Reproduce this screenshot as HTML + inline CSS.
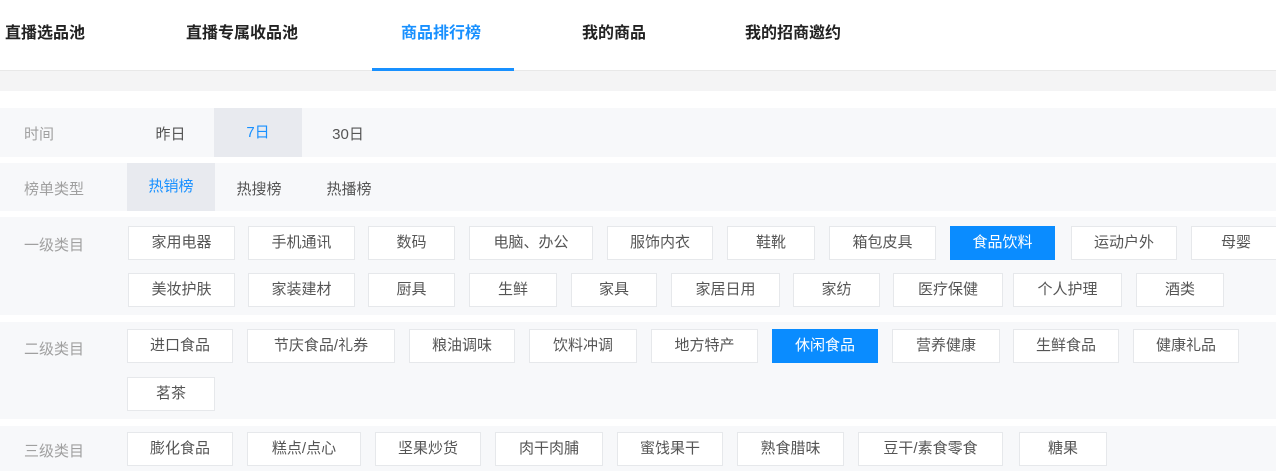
<!DOCTYPE html>
<html><head><meta charset="utf-8"><style>
*{margin:0;padding:0;box-sizing:border-box}
body{width:1276px;height:471px;overflow:hidden;background:#fff;font-family:"Liberation Sans","Noto Sans CJK SC",sans-serif;position:relative}
.a{position:absolute}
.tab{position:absolute;top:19px;font-size:16px;font-weight:bold;color:#222}
.row{position:absolute;left:0;width:1276px;background:#f7f8fa}
.lab{position:absolute;left:24px;font-size:15px;color:#a0a0a0}
.t{position:absolute;height:34px;line-height:32px;border:1px solid #e6e8eb;background:#fff;text-align:center;font-size:15px;color:#555}
.t.on{background:#0a8cff;border-color:#0a8cff;color:#fff}
.opt{position:absolute;font-size:15px;color:#555;text-align:center}
</style></head><body>
<div class="tab" style="left:5px">直播选品池</div>
<div class="tab" style="left:186px">直播专属收品池</div>
<div class="tab" style="left:401px;color:#1890ff">商品排行榜</div>
<div class="tab" style="left:582px">我的商品</div>
<div class="tab" style="left:745px">我的招商邀约</div>
<div class="a" style="left:0;top:70px;width:1276px;height:1px;background:#e8e8e8"></div>
<div class="a" style="left:372px;top:68px;width:142px;height:3px;background:#1890ff"></div>
<div class="a" style="left:0;top:71px;width:1276px;height:20px;background:#f4f4f5"></div>

<div class="row" style="top:108px;height:49px">
<div class="lab" style="top:15px">时间</div>
<div class="opt" style="left:127px;width:87px;top:15px">昨日</div>
<div class="opt" style="left:214px;width:88px;top:0;height:49px;line-height:49px;background:#e8eaef;color:#1890ff">7日</div>
<div class="opt" style="left:302px;width:92px;top:15px">30日</div>
</div>
<div class="row" style="top:163px;height:48px">
<div class="lab" style="top:15px">榜单类型</div>
<div class="opt" style="left:127px;width:88px;top:0;height:48px;line-height:48px;background:#e8eaef;color:#1890ff">热销榜</div>
<div class="opt" style="left:215px;width:88px;top:15px">热搜榜</div>
<div class="opt" style="left:303px;width:92px;top:15px">热播榜</div>
</div>
<div class="row" style="top:217px;height:98px">
<div class="lab" style="top:17px">一级类目</div>
</div>
<div class="row" style="top:322px;height:97px">
<div class="lab" style="top:16px">二级类目</div>
</div>
<div class="row" style="top:426px;height:45px">
<div class="lab" style="top:14px">三级类目</div>
</div>

<div class="t" style="left:128px;top:226px;width:107px">家用电器</div>
<div class="t" style="left:248px;top:226px;width:107px">手机通讯</div>
<div class="t" style="left:368px;top:226px;width:87px">数码</div>
<div class="t" style="left:469px;top:226px;width:124px">电脑、办公</div>
<div class="t" style="left:607px;top:226px;width:106px">服饰内衣</div>
<div class="t" style="left:727px;top:226px;width:88px">鞋靴</div>
<div class="t" style="left:829px;top:226px;width:107px">箱包皮具</div>
<div class="t on" style="left:950px;top:226px;width:105px">食品饮料</div>
<div class="t" style="left:1071px;top:226px;width:106px">运动户外</div>
<div class="t" style="left:1191px;top:226px;width:90px">母婴</div>

<div class="t" style="left:128px;top:273px;width:107px">美妆护肤</div>
<div class="t" style="left:248px;top:273px;width:107px">家装建材</div>
<div class="t" style="left:368px;top:273px;width:87px">厨具</div>
<div class="t" style="left:469px;top:273px;width:88px">生鲜</div>
<div class="t" style="left:571px;top:273px;width:86px">家具</div>
<div class="t" style="left:671px;top:273px;width:109px">家居日用</div>
<div class="t" style="left:793px;top:273px;width:87px">家纺</div>
<div class="t" style="left:893px;top:273px;width:110px">医疗保健</div>
<div class="t" style="left:1013px;top:273px;width:109px">个人护理</div>
<div class="t" style="left:1136px;top:273px;width:88px">酒类</div>

<div class="t" style="left:127px;top:329px;width:106px">进口食品</div>
<div class="t" style="left:247px;top:329px;width:148px">节庆食品/礼券</div>
<div class="t" style="left:409px;top:329px;width:106px">粮油调味</div>
<div class="t" style="left:529px;top:329px;width:108px">饮料冲调</div>
<div class="t" style="left:651px;top:329px;width:107px">地方特产</div>
<div class="t on" style="left:772px;top:329px;width:106px">休闲食品</div>
<div class="t" style="left:892px;top:329px;width:108px">营养健康</div>
<div class="t" style="left:1013px;top:329px;width:106px">生鲜食品</div>
<div class="t" style="left:1133px;top:329px;width:106px">健康礼品</div>
<div class="t" style="left:127px;top:377px;width:88px">茗茶</div>

<div class="t" style="left:127px;top:432px;width:106px">膨化食品</div>
<div class="t" style="left:247px;top:432px;width:114px">糕点/点心</div>
<div class="t" style="left:375px;top:432px;width:106px">坚果炒货</div>
<div class="t" style="left:495px;top:432px;width:108px">肉干肉脯</div>
<div class="t" style="left:617px;top:432px;width:106px">蜜饯果干</div>
<div class="t" style="left:737px;top:432px;width:107px">熟食腊味</div>
<div class="t" style="left:858px;top:432px;width:145px">豆干/素食零食</div>
<div class="t" style="left:1019px;top:432px;width:88px">糖果</div>
</body></html>
